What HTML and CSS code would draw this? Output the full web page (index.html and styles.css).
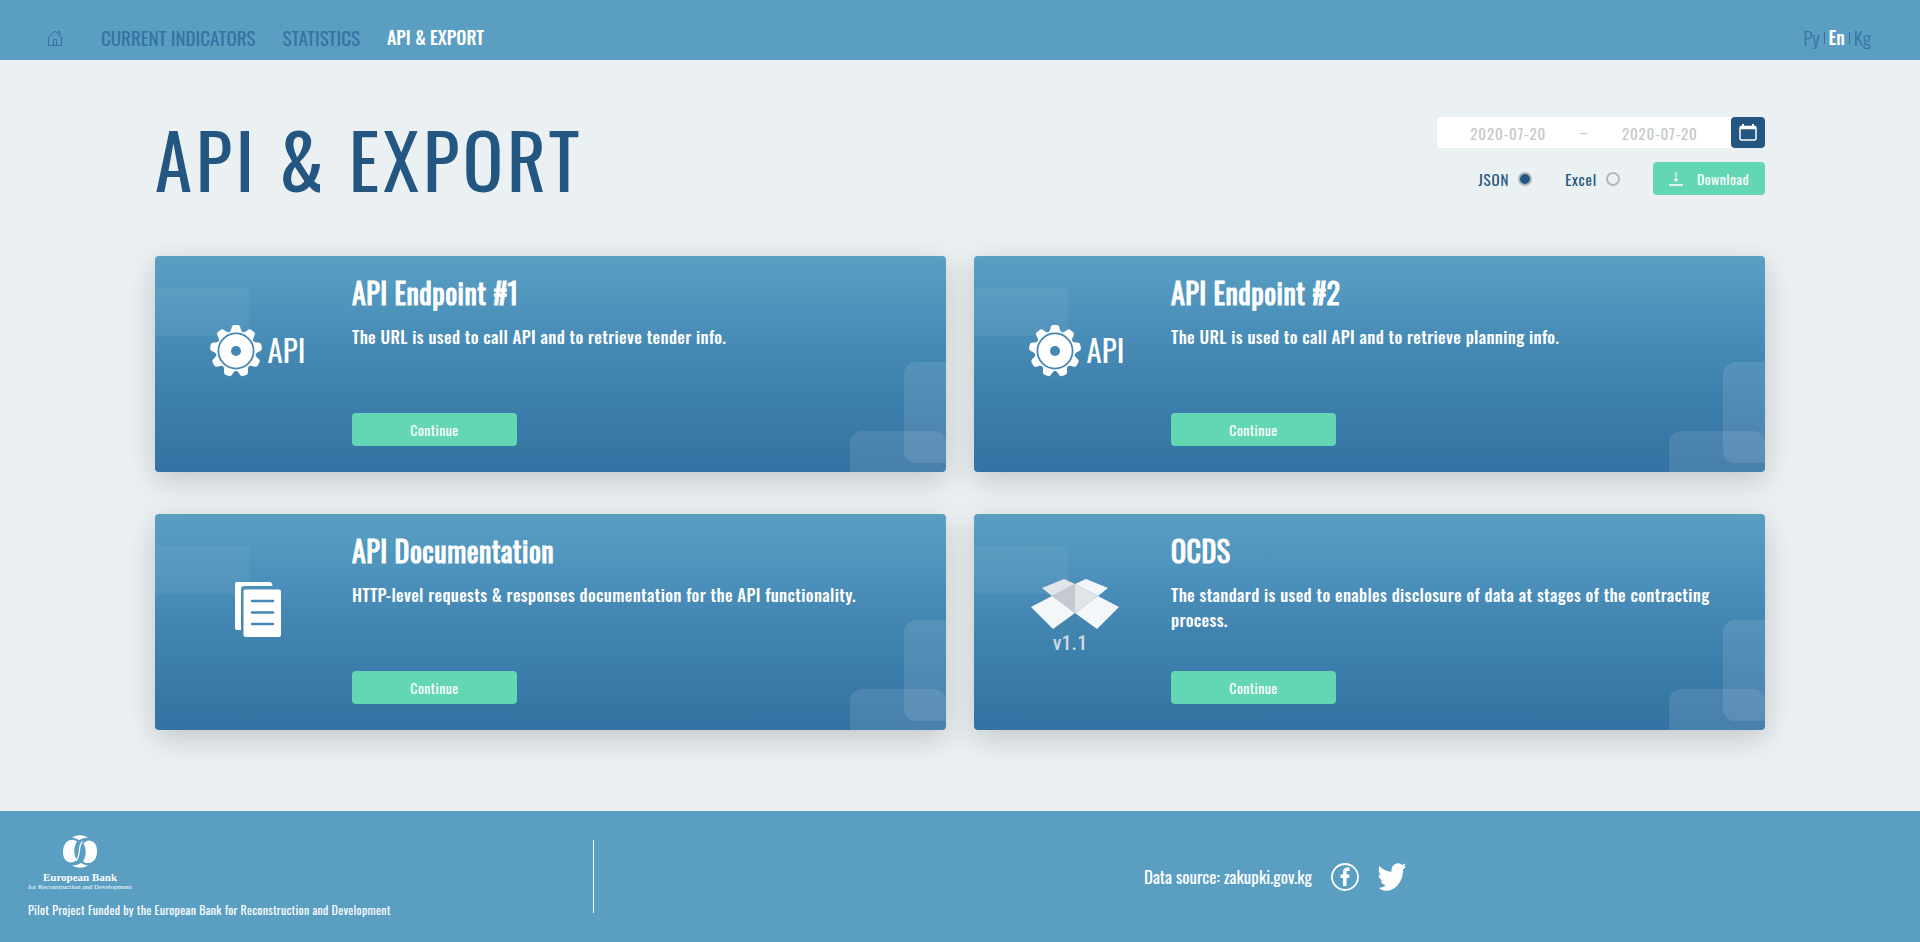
FILE: index.html
```html
<!DOCTYPE html>
<html lang="en">
<head>
<meta charset="utf-8">
<title>API &amp; Export</title>
<link rel="stylesheet" href="styles.css">
</head>
<body>
<svg class="defs" aria-hidden="true">
  <symbol id="gear" viewBox="-26 -26 52 52">
    <defs><path id="tooth" d="M-9 -17Q-5 -19 -4.500 -23Q-4 -26 -2 -26H2Q4 -26 4.500 -23Q5 -19 9 -17Z"/></defs>
    <g fill="#fff">
      <circle r="19.500"/>
      <use href="#tooth"/><use href="#tooth" transform="rotate(40)"/><use href="#tooth" transform="rotate(80)"/>
      <use href="#tooth" transform="rotate(120)"/><use href="#tooth" transform="rotate(160)"/><use href="#tooth" transform="rotate(200)"/>
      <use href="#tooth" transform="rotate(240)"/><use href="#tooth" transform="rotate(280)"/><use href="#tooth" transform="rotate(320)"/>
    </g>
    <circle r="17.600" fill="none" stroke="#4488b3" stroke-width="1.800"/>
    <circle r="5" fill="#4488b3"/>
  </symbol>
</svg>

<header class="header">
  <nav class="nav">
    <a class="home" href="#" aria-label="Home">
      <svg width="16" height="16" viewBox="0 0 16 16" fill="none" stroke="currentColor"><path d="M.5 8.500 8 1l7.500 7.500M1.500 7.500v8h13v-8M6.500 15.500v-6h3v6M11 3.500V1.500h2v4"/></svg>
    </a>
    <a href="#">CURRENT INDICATORS</a>
    <a href="#">STATISTICS</a>
    <a class="active" href="#">API &amp; EXPORT</a>
  </nav>
  <nav class="langs" aria-label="Language">
    <a href="#">Ру</a><a class="active" href="#">En</a><a href="#">Kg</a>
  </nav>
</header>

<main class="main">
  <div class="top">
    <h1>API &amp; EXPORT</h1>
    <form class="export">
      <div class="range">
        <input type="text" aria-label="Start date" placeholder="2020-07-20">
        <span class="dash">–</span>
        <input type="text" aria-label="End date" placeholder="2020-07-20">
        <button class="calendar" type="button" aria-label="Open calendar">
          <svg width="18" height="17" viewBox="0 0 18 17" fill="none" stroke="#fff" stroke-width="1.500"><rect x="1" y="2.500" width="16" height="13.500" rx="1.500"/><path d="M1 4h16" stroke-width="2.500"/><path d="M4 0v3M14 0v3" stroke-width="2"/></svg>
        </button>
      </div>
      <div class="format">
        <label>JSON <input type="radio" name="format" checked></label>
        <label>Excel <input type="radio" name="format"></label>
        <button class="btn download" type="button">
          <svg width="14" height="14" viewBox="0 0 14 14" fill="none" stroke="#fff"><path d="M7 0v9"/><path d="M4.500 7 7 10l2.500-3z" fill="#fff" stroke="none"/><path d="M0 13h14" stroke-width="1.500"/></svg>
          Download
        </button>
      </div>
    </form>
  </div>

  <div class="cards">
    <section class="card">
      <div class="art"><svg width="52" height="52"><use href="#gear"/></svg><span class="api">API</span></div>
      <div class="body">
        <h2>API Endpoint #1</h2>
        <p>The URL is used to call API and to retrieve tender info.</p>
        <button class="btn" type="button">Continue</button>
      </div>
    </section>
    <section class="card">
      <div class="art"><svg width="52" height="52"><use href="#gear"/></svg><span class="api">API</span></div>
      <div class="body">
        <h2>API Endpoint #2</h2>
        <p>The URL is used to call API and to retrieve planning info.</p>
        <button class="btn" type="button">Continue</button>
      </div>
    </section>
    <section class="card">
      <div class="art">
        <svg width="46" height="55" viewBox="0 0 46 55" fill="#fff"><path d="M2 0h33q2 0 2.500 4H9Q6 4 6 7v41H2q-2 0-2-2V2Q0 0 2 0z"/><rect x="8.500" y="7.500" width="37.500" height="47.500" rx="2"/><path d="M17 19h21M17 30.500h21M17 42h21" stroke="#4488b3" stroke-width="2.500" stroke-linecap="round"/></svg>
      </div>
      <div class="body">
        <h2>API Documentation</h2>
        <p>HTTP-level requests &amp; responses documentation for the API functionality.</p>
        <button class="btn" type="button">Continue</button>
      </div>
    </section>
    <section class="card">
      <div class="art stacked">
        <svg width="88" height="50" viewBox="0 0 88 50"><path d="M44 5 67 17 44 34z" fill="#e1e5e9"/><path d="M44 5 21 17 44 34z" fill="#c5cad1"/><path d="M33 0 44 5 21 17 11 9z" fill="#e1e5e9"/><path d="M55 0 44 5 67 17 77 9z" fill="#f4f7f9"/><path d="M21 17 44 34 22 50 0 28z" fill="#f4f7f9"/><path d="M67 17 44 34 66 50 88 28z" fill="#f4f7f9"/></svg>
        <span class="version">v1.1</span>
      </div>
      <div class="body">
        <h2>OCDS</h2>
        <p>The standard is used to enables disclosure of data at stages of the contracting process.</p>
        <button class="btn" type="button">Continue</button>
      </div>
    </section>
  </div>
</main>

<footer class="footer">
  <div class="funding">
    <div class="bank">
      <svg width="34" height="33" viewBox="0 0 34 33" fill="#fff"><path d="M9 2.500Q17-2 25 2.500Q20 2.500 16 5Q13 3 9 2.500zM9 30.500Q17 35 25 30.500Q21 30 18 28Q14 30.500 9 30.500z"/><path d="M8 5C2 6 0 12 0 17c0 6 3 10.500 8 10.500 2 0 4-1 5.500-3C10 18 11 11 14 6.500 12 5 10 4.700 8 5z"/><path d="M26 5.500C32 6 34 11 34 16c0 6-2 11-8 12-2 .3-4-.3-6-1.500C23 22 24 15 20.500 8.500 22 6.500 24 5.500 26 5.500z"/><path d="M19.500 6.500C14 12 19 20 12.500 26" fill="none" stroke="#fff" stroke-width="1.200"/></svg>
      <strong>European Bank</strong>
      <small>for Reconstruction and Development</small>
    </div>
    <p>Pilot Project Funded by the European Bank for Reconstruction and Development</p>
  </div>
  <div class="source">
    <a href="#">Data source: zakupki.gov.kg</a>
    <a href="#" aria-label="Facebook"><svg width="28" height="28" viewBox="0 0 28 28"><circle cx="14" cy="14" r="13" fill="none" stroke="#fff" stroke-width="1.800"/><path d="M12 23v-8H9.500v-3.500H12V9c0-3 1.500-4.500 4.200-4.500h2.300V8h-1.800c-.9 0-1.200.5-1.200 1.300v2.200h3l-.4 3.500h-2.600v8z" fill="#fff"/></svg></a>
    <a href="#" aria-label="Twitter"><svg width="28" height="28" viewBox="0 0 24 24" preserveAspectRatio="none"><path d="M24 3.100a9.800 9.800 0 0 1-2.500 2.400C21.700 15 15.500 23.800 6.800 23.800 4 23.800 1.600 22.500.5 21.300c2.500.2 4.700-.9 6.200-2.400-2.300-.3-3.800-1.500-4.400-3.600h2C2 14.300.5 12.400.6 10l2 .6C.6 8.700 0 5.800 1.200 2.600 3.800 5.500 7.400 7.400 11.700 7.500 11 3.500 13.700.2 17.200.2c1.500 0 2.600.6 3.500 1.500l3-1.200c-.3 1-1 2-1.900 2.600z" fill="#fff"/></svg></a>
  </div>
</footer>
</body>
</html>
```
FILE: styles.css
```css
* { box-sizing: border-box; }
body {
  margin: 0;
  min-height: 100vh;
  display: flex;
  flex-direction: column;
  background: #ebf0f3;
  color: #fff;
  font-family: Oswald, "Roboto Condensed", sans-serif;
  font-size: 17px;
}
h1, h2, p { margin: 0; }
a { color: inherit; text-decoration: none; }
svg { display: block; }
button, input { font: inherit; letter-spacing: inherit; border: 0; padding: 0; margin: 0; }
.defs { position: absolute; width: 0; height: 0; }

.header {
  height: 60px;
  padding: 15px 49px 0 47px;
  display: flex;
  justify-content: space-between;
  background: #5a9ec2;
  color: #3473a3;
  font-size: 19px;
  line-height: 45px;
}
.nav { display: flex; gap: 27px; }
.home { display: flex; align-items: center; margin-right: 11px; }
.active { color: #fff; font-size: 18px; font-weight: 500; }
.langs { display: flex; align-items: center; font-weight: 300; }
.langs a + a { display: flex; align-items: center; }
.langs a + a::before { content: ""; width: 1px; height: 12px; margin: 0 4px; background: #3473a3; }

.main { flex: 1; padding: 56px 155px 80px; }
.top { display: flex; justify-content: space-between; height: 140px; }
h1 {
  color: #235680;
  font-size: 75px;
  font-weight: 400;
  line-height: 84px;
  letter-spacing: .05em;
  padding-top: 1px;
}
.export { width: 328px; padding-top: 1px; color: #235680; letter-spacing: .05em; }
.range {
  display: flex;
  align-items: center;
  height: 31px;
  background: #fff;
  border-radius: 4px;
  color: #c4c8cb;
}
.range input {
  flex: 1;
  min-width: 0;
  height: 32px;
  text-align: center;
  background: none;
  font-size: 15px;
}
.range input::placeholder { color: #c4c8cb; opacity: 1; }
.dash { font-size: 15px; line-height: 28px; padding-bottom: 4px; }
.calendar {
  width: 34px;
  height: 31px;
  display: grid;
  place-items: center;
  background: #235680;
  border-radius: 4px;
}
.format { display: flex; align-items: center; justify-content: flex-end; margin-top: 14px; font-size: 15px; }
.format label { display: flex; align-items: center; gap: 9px; margin-right: 33px; }
.format input {
  appearance: none;
  width: 14px;
  height: 14px;
  border: 2px solid #b0b8be;
  border-radius: 50%;
}
.format input:checked { background: #235680; }

.btn {
  display: flex;
  align-items: center;
  justify-content: center;
  width: 165px;
  height: 33px;
  border-radius: 4px;
  background: #63d6b4;
  color: #fff;
  font-size: 14px;
  font-weight: 400;
  letter-spacing: .03em;
}
.download { width: 112px; gap: 14px; }

.cards { display: grid; grid-template-columns: 1fr 1fr; gap: 42px 28px; }
.card {
  position: relative;
  display: grid;
  grid-template-columns: 197px 1fr;
  min-height: 216px;
  border-radius: 4px;
  background:
    linear-gradient(rgba(255, 255, 255, .05), rgba(255, 255, 255, .05)) 0 32px / 94px 48px no-repeat,
    linear-gradient(#5a9fc2, #4c91bb 29%, #4488b3 45%, #3372a2);
  box-shadow: 0 8px 30px rgba(0, 0, 0, .18);
  overflow: hidden;
}
.card::before, .card::after { content: ""; position: absolute; right: 0; background: rgba(255, 255, 255, .1); }
.card::before { top: 106px; width: 42px; height: 101px; border-radius: 12px 0 0 12px; }
.card::after { bottom: 0; width: 96px; height: 41px; border-radius: 12px 12px 0 0; }
.art { display: flex; align-items: center; justify-content: center; gap: 6px; padding: 0 10px 26px 18px; }
.stacked { flex-direction: column; gap: 0; padding: 0 10px 8px 15px; }
.api { font-size: 31px; font-weight: 400; line-height: 46px; margin-bottom: 4px; }
.version { color: #d0dae3; font-family: "Roboto Condensed", Roboto, sans-serif; font-size: 20px; font-weight: 500; line-height: 28px; margin-right: 10px; }
.body {
  position: relative;
  z-index: 1;
  display: flex;
  flex-direction: column;
  padding: 16px 32px 26px 0;
  letter-spacing: .03em;
}
h2 { font-size: 28px; font-weight: 400; line-height: 42px; -webkit-text-stroke: 1px currentColor; }
.body p { margin-top: 10px; font-weight: 500; line-height: 25px; letter-spacing: .02em; }
.body .btn { margin-top: auto; }

.footer { display: flex; align-items: center; min-height: 131px; padding-left: 28px; background: #5a9ec2; }
.funding { width: 566px; height: 73px; display: flex; flex-direction: column; justify-content: center; border-right: 1px solid #fff; }
.bank { width: 104px; display: flex; flex-direction: column; align-items: center; font-family: "Liberation Serif", serif; }
.bank strong { font-size: 11px; line-height: 14px; margin-top: 2px; }
.bank small { font-size: 7px; line-height: 7px; white-space: nowrap; }
.funding p { margin-top: 10px; font-size: 12px; line-height: 18px; letter-spacing: .02em; }
.source { flex: 1; display: flex; align-items: center; justify-content: center; gap: 19px; padding-left: 36px; }
```
